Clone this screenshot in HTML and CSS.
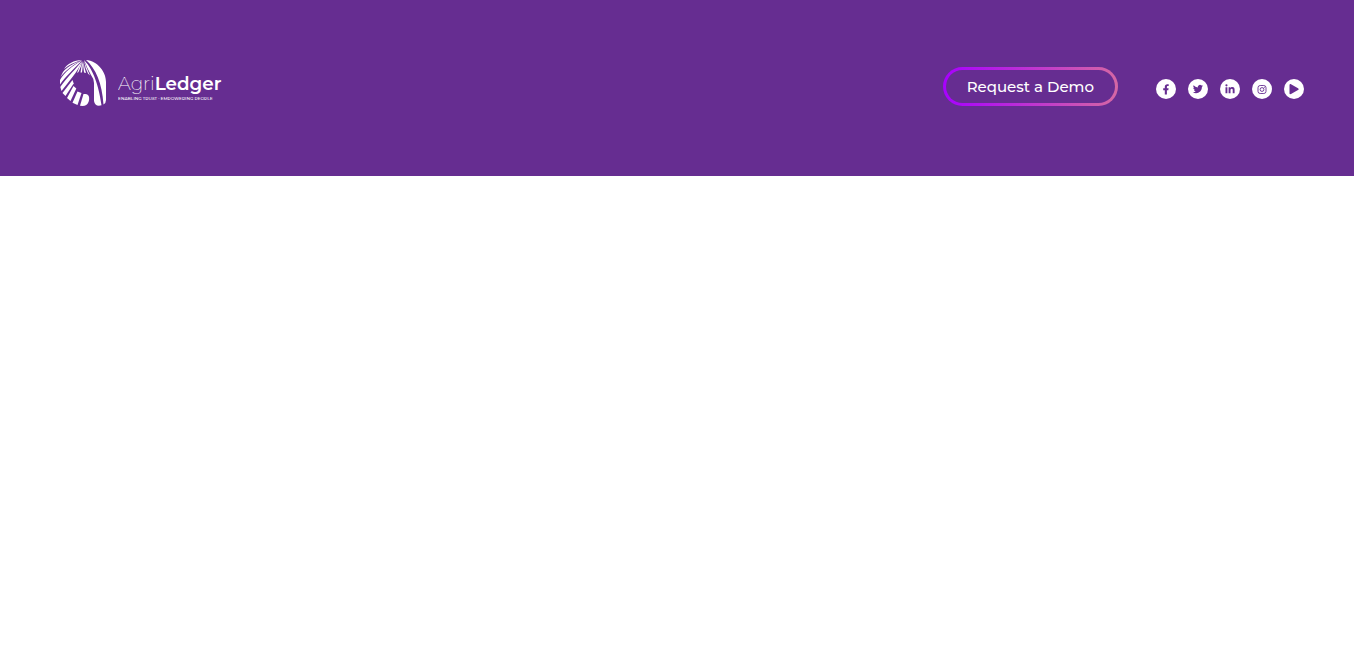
FILE: index.html
```html
<!DOCTYPE html>
<html lang="en">

    <head>
        <meta charset="UTF-8">
        <meta name="viewport" content="width=device-width, initial-scale=1.0">
        <title>AgriLedger</title>

        <link rel="stylesheet" href="styles.css">
    </head>

    <body>
        <header class="header">
            <a class="logo" href="#" aria-label="AgriLedger">
                <svg class="logo-mark" viewBox="0 0 46 46" aria-hidden="true">
                    <path d="M22 0C14 0 7 4 4 9Q11 3 22 0Z" />
                    <path d="M22 0.300C12 4 6 8 3 12L0.500 17C5 11 14 4 22 0.300Z" />
                    <path d="M22 0.600C13 5 4 13 0 20V24.500C5 17 15 8 22 0.600Z" />
                    <path d="M22 0.900C17 8 6 18 0.300 27L1.500 31C8 22 18 12 22 0.900Z" />
                    <path d="M12.500 20L13.700 23.500L5.500 36L2.500 33Z" />
                    <path d="M13.500 26L16.300 28.500L10.500 41L7 38Z" />
                    <path d="M17.500 31.500L21.500 33L17.500 45L12.500 42.800Z" />
                    <path d="M23.500 34H25.500C29 34 30 38 28.500 42Q27 46 22.500 46L20 45.700Z" />
                    <path d="M22.500 1Q19 7 17 13L18.500 12Q21.500 6 22.500 1Z" />
                    <path d="M23 1Q21 7 20.500 12.500H22Q23 6 23 1Z" />
                    <path d="M23.500 1Q23 7 24 12.500L26 13Q24 7 23.500 1Z" />
                    <path d="M24 0.500Q25 8 28 13.500L30 15.500Q26.500 8 24 0.500Z" />
                    <path d="M24 0C31 7 38 20 41.500 45.300Q35 47 34 41V23Q33.500 18 31 15Q27 8 24 0Z" />
                    <path d="M26 0C38 1 46 12 46 22V40Q46 43 43.500 44.500C42 23 36 9 26 0Z" />
                </svg>
                <svg class="logo-text" viewBox="0 0 318 102" aria-hidden="true">
                    <text class="logo-name" x="0" y="56">Agri<tspan class="logo-ledger">Ledger</tspan></text>
                    <text class="logo-tagline" x="0" y="88">ENABLING TRUST · EMPOWERING PEOPLE</text>
                </svg>
            </a>

            <div class="header-right">
                <button class="demo-button" type="button">Request a Demo</button>

                <nav class="social" aria-label="Social media">
                    <a href="#" aria-label="Facebook">
                        <svg viewBox="0 0 20 20"><path d="M8.800 15.500V11.200H7.200V9.200h1.600V7.800c0-1.700 1-2.600 2.500-2.600.7 0 1.400.1 1.400.1v1.600h-.8c-.8 0-1 .5-1 1v1.300h1.700l-.3 2h-1.400V15.500Z" /></svg>
                    </a>
                    <a href="#" aria-label="Twitter">
                        <svg viewBox="0 0 20 20"><path d="M15 7c-.4.200-.8.300-1.200.3.500-.3.700-.7.900-1.200-.4.300-.9.400-1.300.5a2.100 2.100 0 0 0-3.600 1.900A5.900 5.900 0 0 1 5.600 6.300c-.6 1-.2 2.200.6 2.800-.3 0-.6-.1-.9-.3 0 1 .7 1.900 1.600 2.100-.3.100-.6.100-.9 0 .3.800 1 1.400 1.900 1.400A4.200 4.200 0 0 1 4.800 13.200c4.100 2.600 9.200-.2 9.100-5.100.4-.3.800-.7 1.100-1.100Z" /></svg>
                    </a>
                    <a href="#" aria-label="LinkedIn">
                        <svg viewBox="0 0 20 20"><path d="M5.500 8.200h1.900v6H5.500ZM8.600 8.200h1.800V9c.3-.5.900-1 1.900-1 1.900 0 2.300 1.300 2.300 2.900v3.300h-1.900v-2.900c0-.7 0-1.600-1-1.600s-1.200.8-1.200 1.600v2.900H8.600Z" /><circle cx="6.450" cy="6.300" r="1.100" /></svg>
                    </a>
                    <a href="#" aria-label="Instagram">
                        <svg class="instagram" viewBox="0 0 20 20"><rect x="6" y="6.500" width="8" height="8" rx="2.200" /><circle cx="10" cy="10.500" r="1.900" /><circle cx="12.300" cy="8.200" r=".2" /></svg>
                    </a>
                    <a href="#" aria-label="Videos">
                        <svg viewBox="0 0 20 20"><path d="M5.500 6.200c0-1 .7-1.400 1.500-.9l7 4c.9.500.9 1.300 0 1.800l-7 4c-.8.400-1.500 0-1.500-.9Z" /></svg>
                    </a>
                </nav>
            </div>
        </header>
    </body>

</html>
```
FILE: styles.css
```css
* {
    box-sizing: border-box;
}

body {
    margin: 0;
    padding-right: 12px;
    background-color: #fff;
    font-family: Montserrat, Inter, sans-serif;
}

.header {
    display: flex;
    align-items: flex-start;
    justify-content: space-between;
    padding: 60px 50px 70px 60px;
    background-color: #662d91;
}

.logo {
    display: flex;
    gap: 12px;
}

.logo svg {
    fill: #fff;
}

.logo-mark {
    width: 46px;
    height: 46px;
}

.logo-text {
    width: 106px;
    height: 34px;
    margin-top: 11px;
}

.logo-name {
    font-size: 55px;
    font-weight: 200;
}

.logo-ledger {
    font-weight: 600;
}

.logo-tagline {
    font-size: 13px;
    font-weight: 500;
}

.header-right {
    display: flex;
    align-items: center;
    gap: 38px;
    padding-top: 7px;
}

.demo-button {
    height: 39px;
    padding: 0 21px;
    border: 3px solid transparent;
    border-radius: 20px;
    background: linear-gradient(#662d91, #662d91) padding-box, linear-gradient(to right, #a800ff, #d567a4) border-box;
    color: #fff;
    font-family: inherit;
    font-size: 15px;
    font-weight: 500;
    cursor: pointer;
}

.social {
    display: flex;
    gap: 12px;
    padding-top: 5px;
}

.social a {
    width: 20px;
    height: 20px;
    border-radius: 50%;
    background-color: #fff;
}

.social svg {
    display: block;
    fill: #662d91;
}

.social .instagram {
    fill: none;
    stroke: #662d91;
    stroke-width: 0.9;
}
```
